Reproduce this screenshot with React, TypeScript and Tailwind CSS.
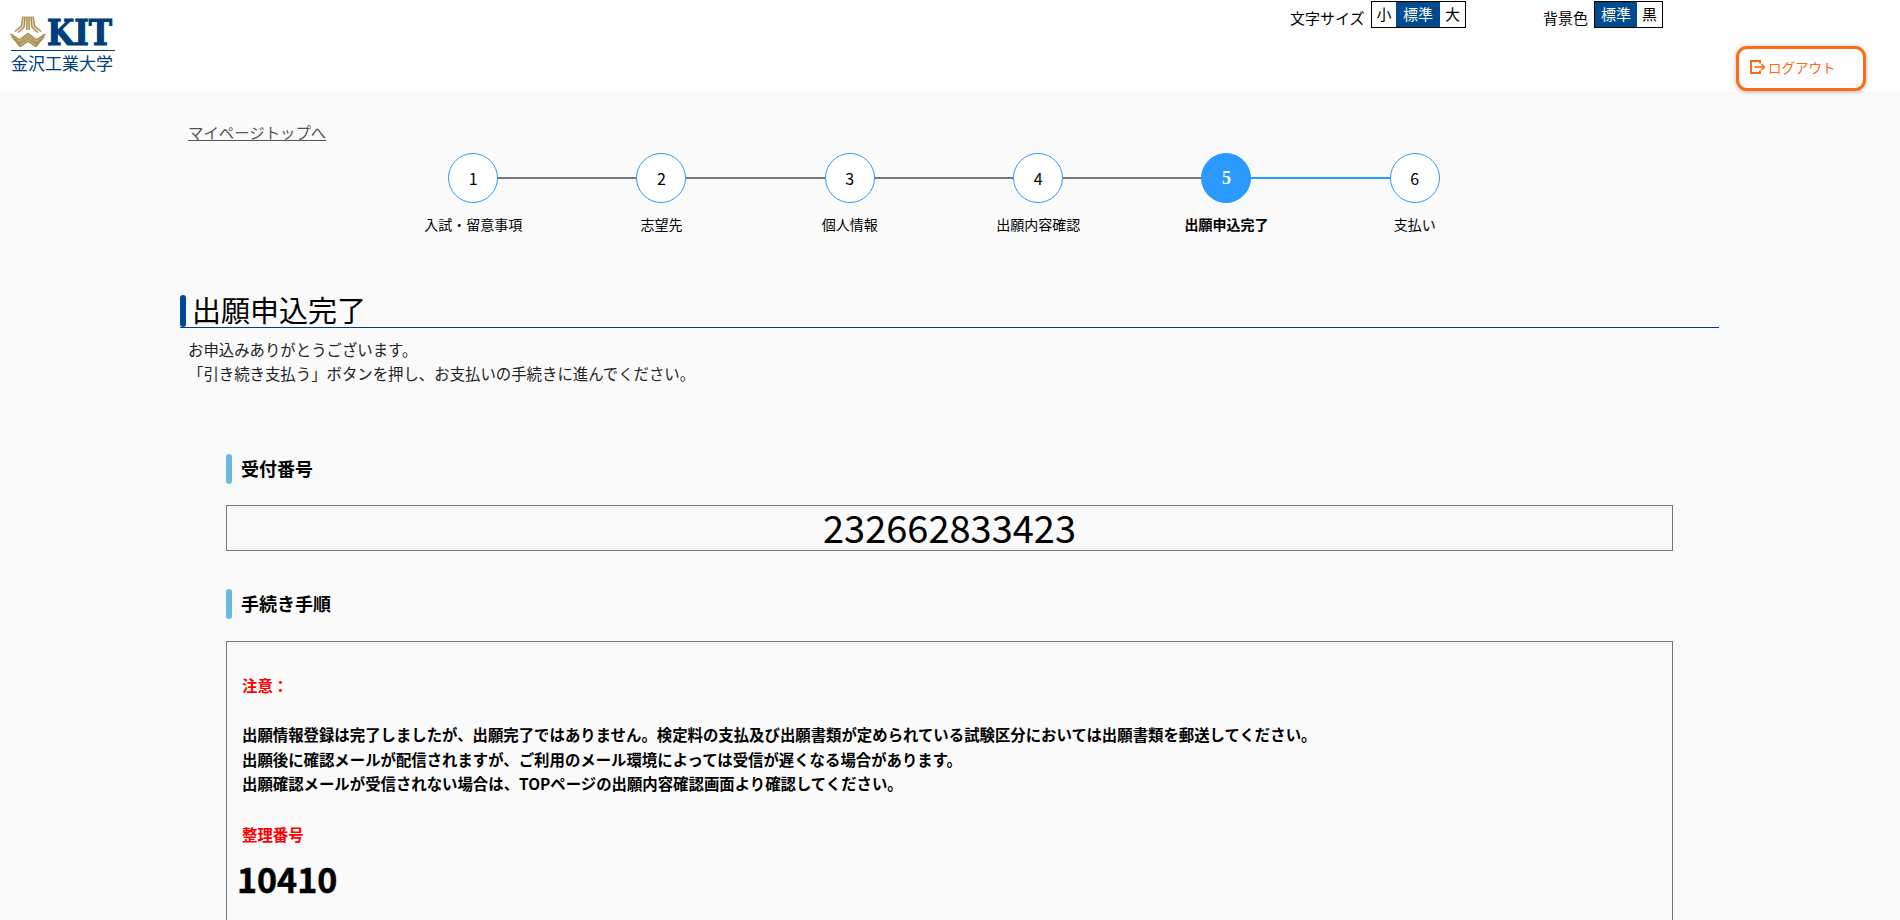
import React from "react";

const steps = ["入試・留意事項", "志望先", "個人情報", "出願内容確認", "出願申込完了", "支払い"];

const Emblem = () => (
  <svg className="shrink-0" width="36" height="31" viewBox="0 0 36 31" fill="none" stroke="#a98f4e" strokeWidth="1.6">
    <path d="M13 0.5 L11.5 10 L5 15.5" />
    <path d="M15 0.5 L14 11 L8 16.5" />
    <path d="M17 0.5 L16.8 14" />
    <path d="M19 0.5 L19.2 14" />
    <path d="M21 0.5 L22 11 L28 16.5" />
    <path d="M23 0.5 L24.5 10 L31 15.5" />
    <path d="M0.5 18 L9.5 24 L18 17.5 L26.5 24 L35.5 18" />
    <path d="M1.5 20.5 L9.5 26.5 L18 20 L26.5 26.5 L34.5 20.5" />
    <path d="M3.5 23 L9.5 28.5 L18 22.5 L26.5 28.5 L32.5 23" />
    <path d="M6.5 26 L10 30.5 L18 25 L26 30.5 L29.5 26" />
  </svg>
);

const SubHeading = ({ children }: { children: React.ReactNode }) => (
  <div className="flex items-center h-[29px]">
    <div className="w-[6px] h-[30px] rounded-full bg-[#6bb9e3]" />
    <h3 className="ml-[9px] text-[18px] font-bold text-black">{children}</h3>
  </div>
);

export default function App() {
  return (
    <div
      className="h-[920px] overflow-hidden bg-[#fafafa] text-black"
      style={{ fontFamily: '"Noto Sans CJK JP", "Noto Sans", sans-serif' }}
    >
      {/* header */}
      <header className="h-[92px] bg-white flex">
        <div className="ml-[10px] mt-[16px] w-[105px]">
          <div className="flex items-center h-[31px]">
            <Emblem />
            <span
              className="ml-[1px] origin-left scale-x-[0.87] text-[#003d7c] text-[36px] leading-none font-bold [-webkit-text-stroke:1.2px_#003d7c]"
              style={{ fontFamily: '"DejaVu Serif", serif' }}
            >
              KIT
            </span>
          </div>
          <div className="ml-[1px] mt-[3px] border-t border-[#003d7c] pt-[1px] text-[#003d7c] text-[17px] leading-[22px] whitespace-nowrap">
            金沢工業大学
          </div>
        </div>

        <div className="ml-auto w-[610px] relative">
          <div className="flex items-start pl-0 text-[15px]">
            <span className="mt-[7px] leading-[22px] w-[81px]">文字サイズ</span>
            <div className="flex mt-[1px] h-[27px] border border-black leading-[23px] text-center">
              <span className="w-[24px] bg-white">小</span>
              <span className="w-[44px] bg-[#004a8f] text-white">標準</span>
              <span className="w-[25px] bg-white">大</span>
            </div>
            <span className="ml-[77px] mt-[7px] leading-[22px] w-[51px]">背景色</span>
            <div className="flex mt-[1px] h-[27px] border border-black leading-[23px] text-center">
              <span className="w-[42px] bg-[#004a8f] text-white">標準</span>
              <span className="w-[25px] bg-white">黒</span>
            </div>
          </div>
          <button className="absolute left-[446px] top-[46px] w-[130px] h-[45px] flex items-center pl-[11px] bg-white border-[3px] border-[#ff6a13] rounded-[11px] shadow-[0_1px_4px_rgba(0,0,0,0.3)] text-[#ff6a13] text-[13.5px]">
            <svg className="mb-[3px]" width="16" height="14" viewBox="0 0 16 14" fill="none" stroke="#ff6a13" strokeWidth="2">
              <path d="M10 3.5 V1 H1 V13 H10 V10.5" />
              <path d="M4.5 7 H14.5 M11.5 4 L14.5 7 L11.5 10" strokeWidth="1.6" />
            </svg>
            <span className="ml-[2px] mb-[3px]">ログアウト</span>
          </button>
        </div>
      </header>

      {/* main */}
      <main className="mx-[180px] w-[1539px]">
        <a className="block ml-[8px] pt-[29px] h-[50px] leading-[22px] text-[15.4px] text-[#555] underline">
          マイページトップへ
        </a>

        {/* stepper */}
        <div className="ml-[199px] w-[1130px] grid grid-cols-6 mt-[11px]">
          {steps.map((label, i) => {
            const active = i === 4;
            return (
              <div key={label} className="relative flex flex-col items-center">
                {i < 5 && (
                  <div
                    className={`absolute top-[24px] left-1/2 w-full h-[2px] ${
                      active ? "bg-[#2b9aff]" : "bg-[#777]"
                    }`}
                  />
                )}
                <div
                  className={`relative w-[50px] h-[50px] rounded-full flex items-center justify-center text-[16px] border ${
                    active
                      ? "bg-[#2b9aff] border-[#2b9aff] text-white font-bold"
                      : "bg-white border-[#2b9aff] text-black"
                  }`}
                  style={active ? { fontFamily: '"Liberation Serif", serif', fontSize: 18 } : undefined}
                >
                  {i + 1}
                </div>
                <div className={`mt-[11px] text-[14px] leading-[20px] ${active ? "font-bold" : ""}`}>
                  {label}
                </div>
              </div>
            );
          })}
        </div>

        {/* page title */}
        <div className="mt-[61px] flex items-center h-[33px] border-b border-[#004080] relative">
          <div className="w-[6px] h-[32px] rounded-full bg-[#004a8f]" />
          <h1 className="ml-[6px] mt-[-4px] text-[29px] leading-[33px] font-normal">出願申込完了</h1>
        </div>

        <p className="ml-[8px] mt-[9px] text-[15.4px] leading-[24px] text-[#222]">
          お申込みありがとうございます。
          <br />
          「引き続き支払う」ボタンを押し、お支払いの手続きに進んでください。
        </p>

        <div className="ml-[46px] w-[1447px] mt-[69px]">
          <SubHeading>受付番号</SubHeading>
          <div className="mt-[22px] h-[46px] border border-[#777] flex items-center justify-center text-[38px] leading-none pb-[3px]">
            232662833423
          </div>

          <div className="mt-[38px]">
            <SubHeading>手続き手順</SubHeading>
          </div>

          <div className="mt-[23px] h-[400px] border border-[#777] pl-[15px] pt-[31px] text-[15.4px] font-bold">
            <p className="text-[#f00] leading-[24px]">注意：</p>
            <p className="mt-[25px] leading-[24.5px]">
              出願情報登録は完了しましたが、出願完了ではありません。検定料の支払及び出願書類が定められている試験区分においては出願書類を郵送してください。
              <br />
              出願後に確認メールが配信されますが、ご利用のメール環境によっては受信が遅くなる場合があります。
              <br />
              出願確認メールが受信されない場合は、TOPページの出願内容確認画面より確認してください。
            </p>
            <p className="mt-[26px] text-[#f00] leading-[24px]">整理番号</p>
            <p className="mt-[11px] ml-[-5px] text-[34px] leading-[44px] [-webkit-text-stroke:0.5px_#000]">10410</p>
          </div>
        </div>
      </main>
    </div>
  );
}
